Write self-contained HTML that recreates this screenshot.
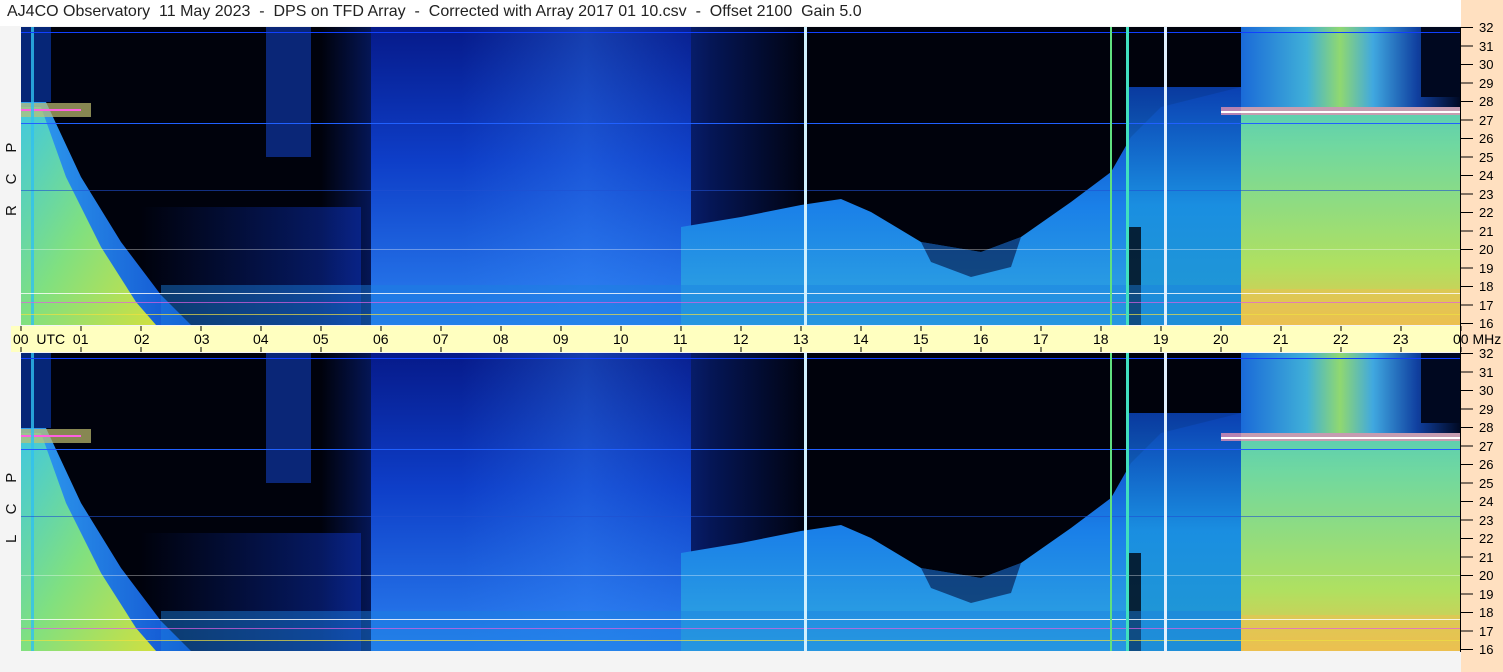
<!DOCTYPE html><html><head><meta charset="utf-8"><style>
body{margin:0;width:1503px;height:672px;overflow:hidden;background:#f4f4f4;font-family:"Liberation Sans",sans-serif;position:relative}
.t{position:absolute;left:7px;top:3px;font-size:16px;color:#222;white-space:pre}
svg{position:absolute;left:0;top:0}
text{white-space:pre}
</style></head><body>
<div style="position:absolute;left:0;top:0;width:1503px;height:26px;background:#fff"></div>
<div class="t">AJ4CO Observatory  11 May 2023  -  DPS on TFD Array  -  Corrected with Array 2017 01 10.csv  -  Offset 2100  Gain 5.0</div>
<svg width="1503" height="672" viewBox="0 0 1503 672" xml:space="preserve">
<defs>
<linearGradient id="blueMid" x1="0" y1="0" x2="0" y2="1"><stop offset="0" stop-color="#061a8a"/><stop offset="0.45" stop-color="#0e3ec8"/><stop offset="1" stop-color="#2a80f0"/></linearGradient>
<linearGradient id="hl" x1="0" y1="0" x2="1" y2="0"><stop offset="0" stop-color="#3a90ff" stop-opacity="0"/><stop offset="0.5" stop-color="#3a90ff" stop-opacity="0.3"/><stop offset="1" stop-color="#3a90ff" stop-opacity="0"/></linearGradient>
<linearGradient id="fadeL" x1="0" y1="0" x2="1" y2="0"><stop offset="0" stop-color="#0a2aa0" stop-opacity="0"/><stop offset="1" stop-color="#0a2aa0" stop-opacity="1"/></linearGradient>
<linearGradient id="fadeR" x1="0" y1="0" x2="1" y2="0"><stop offset="0" stop-color="#0a2aa0"/><stop offset="1" stop-color="#0a2aa0" stop-opacity="0"/></linearGradient>
<linearGradient id="wedge" x1="0" y1="0" x2="1" y2="1"><stop offset="0" stop-color="#40c8e0"/><stop offset="0.5" stop-color="#80e080"/><stop offset="1" stop-color="#d0e040"/></linearGradient>
<linearGradient id="wedgeEdge" x1="0" y1="0" x2="1" y2="0"><stop offset="0" stop-color="#30a0f0"/><stop offset="1" stop-color="#1050d0"/></linearGradient>
<linearGradient id="low" x1="0" y1="0" x2="0" y2="1"><stop offset="0" stop-color="#0c40c0"/><stop offset="0.5" stop-color="#1a80e8"/><stop offset="1" stop-color="#30a8e0"/></linearGradient>
<linearGradient id="grn" x1="0" y1="0" x2="0" y2="1"><stop offset="0" stop-color="#30b8d8"/><stop offset="0.4" stop-color="#70d8a0"/><stop offset="0.8" stop-color="#b0e060"/><stop offset="1" stop-color="#e8c050"/></linearGradient>
<linearGradient id="grnTop" x1="0" y1="0" x2="1" y2="0"><stop offset="0" stop-color="#1a6ad8"/><stop offset="0.3" stop-color="#40b0d8"/><stop offset="0.45" stop-color="#90d870"/><stop offset="0.6" stop-color="#40a8e0"/><stop offset="0.8" stop-color="#1040a0"/><stop offset="1" stop-color="#000820"/></linearGradient>
<linearGradient id="teal" x1="0" y1="0" x2="0" y2="1"><stop offset="0" stop-color="#0a40b0"/><stop offset="0.5" stop-color="#1a90e0"/><stop offset="1" stop-color="#2098d0"/></linearGradient>
<g id="plot">
<rect x="0" y="0" width="1440" height="298" fill="#00020c"/>
<rect x="120" y="180" width="220" height="118" fill="url(#fadeL)" opacity="0.7"/>
<rect x="300" y="0" width="60" height="298" fill="url(#fadeL)" opacity="0.6"/>
<rect x="350" y="0" width="320" height="298" fill="url(#blueMid)"/>
<rect x="440" y="0" width="250" height="298" fill="url(#hl)"/>
<rect x="670" y="0" width="120" height="298" fill="url(#fadeR)" opacity="0.6"/>
<rect x="245" y="0" width="45" height="130" fill="#1040c0" opacity="0.6"/>
<path d="M660 298 L660 200 L720 190 L780 178 L820 172 L850 185 L900 215 L960 225 L1000 210 L1050 175 L1090 145 L1110 110 L1140 80 L1220 60 L1220 298 Z" fill="url(#low)"/>
<path d="M900 215 L960 225 L1000 210 L990 240 L950 250 L910 235 Z" fill="#041040" opacity="0.6"/>
<rect x="1105" y="60" width="115" height="238" fill="url(#teal)" opacity="0.9"/>
<rect x="1108" y="200" width="12" height="98" fill="#000510" opacity="0.8"/>
<rect x="1220" y="0" width="220" height="298" fill="url(#grn)"/>
<rect x="1220" y="0" width="220" height="80" fill="url(#grnTop)"/>
<rect x="1400" y="0" width="40" height="70" fill="#000820"/>
<rect x="1200" y="80" width="240" height="8" fill="#e090b0" opacity="0.8"/>
<rect x="1200" y="84" width="240" height="2" fill="#ffffff"/>
<path d="M0 75 L25 75 L60 150 L100 215 L140 268 L170 298 L0 298 Z" fill="url(#wedgeEdge)"/>
<path d="M0 80 L20 80 L45 150 L80 220 L115 275 L135 298 L0 298 Z" fill="url(#wedge)"/>
<rect x="0" y="76" width="70" height="14" fill="#c0c070" opacity="0.7"/>
<rect x="0" y="82" width="60" height="2" fill="#ff60e0"/>
<rect x="0" y="0" width="30" height="75" fill="#0a40c0" opacity="0.6"/>
<rect x="10" y="0" width="3" height="298" fill="#30c0f0" opacity="0.8"/>
<rect x="140" y="258" width="1080" height="40" fill="#1a80e0" opacity="0.45"/>
<rect x="1220" y="262" width="220" height="36" fill="#f0c050" opacity="0.5"/>
<rect x="0" y="266" width="1440" height="1" fill="#ffffff" opacity="0.8"/>
<rect x="0" y="275" width="1440" height="1" fill="#e060e0" opacity="0.7"/>
<rect x="0" y="287" width="1440" height="1" fill="#f0e040" opacity="0.7"/>
<rect x="0" y="222" width="1440" height="1" fill="#ffffff" opacity="0.35"/>
<rect x="0" y="5" width="1440" height="1" fill="#1040ff"/>
<rect x="0" y="96" width="1440" height="1" fill="#2060ff"/>
<rect x="0" y="163" width="1440" height="1" fill="#2050d0" opacity="0.6"/>
<rect x="783" y="0" width="3" height="298" fill="#d0f0ff"/>
<rect x="1089" y="0" width="2" height="298" fill="#60e080"/>
<rect x="1105" y="0" width="3" height="298" fill="#40e0c0"/>
<rect x="1143" y="0" width="3" height="298" fill="#e0f0ff"/>
</g>
</defs>
<use href="#plot" x="21" y="27"/>
<use href="#plot" x="21" y="353"/>
<rect x="11" y="326" width="1461" height="26" fill="#ffffc0"/>
<rect x="1461" y="0" width="42" height="672" fill="#ffe0c0"/>
<rect x="1460" y="27" width="1" height="625" fill="#000"/>
<g stroke="#000" stroke-width="1">
<path d="M21 326v5M81 326v5M141 326v5M201 326v5M261 326v5M321 326v5M381 326v5M441 326v5M501 326v5M561 326v5M621 326v5M681 326v5M741 326v5M801 326v5M861 326v5M921 326v5M981 326v5M1041 326v5M1101 326v5M1161 326v5M1221 326v5M1281 326v5M1341 326v5M1401 326v5M1461 326v5"/>
<path d="M21 347v5M81 347v5M141 347v5M201 347v5M261 347v5M321 347v5M381 347v5M441 347v5M501 347v5M561 347v5M621 347v5M681 347v5M741 347v5M801 347v5M861 347v5M921 347v5M981 347v5M1041 347v5M1101 347v5M1161 347v5M1221 347v5M1281 347v5M1341 347v5M1401 347v5M1461 347v5"/>
</g>
<g font-family="Liberation Sans, sans-serif" font-size="14" fill="#000">
<text x="13" y="344">00  UTC  01</text>
<text x="134" y="344">02</text><text x="194" y="344">03</text><text x="253" y="344">04</text><text x="313" y="344">05</text><text x="373" y="344">06</text><text x="433" y="344">07</text><text x="493" y="344">08</text><text x="553" y="344">09</text><text x="613" y="344">10</text><text x="673" y="344">11</text><text x="733" y="344">12</text><text x="793" y="344">13</text><text x="853" y="344">14</text><text x="913" y="344">15</text><text x="973" y="344">16</text><text x="1033" y="344">17</text><text x="1093" y="344">18</text><text x="1153" y="344">19</text><text x="1213" y="344">20</text><text x="1273" y="344">21</text><text x="1333" y="344">22</text><text x="1393" y="344">23</text><text x="1453" y="344">00 MHz</text>
</g>
<g font-family="Liberation Sans, sans-serif" font-size="13" fill="#000">
<path stroke="#000" d="M1461 27.5h12M1461 46h12M1461 64.5h12M1461 83h12M1461 101.5h12M1461 120h12M1461 138.5h12M1461 157h12M1461 175.5h12M1461 194h12M1461 212.5h12M1461 231h12M1461 249.5h12M1461 268h12M1461 286.5h12M1461 305h12M1461 323.5h12"/>
<text x="1479" y="32">32</text><text x="1479" y="51">31</text><text x="1479" y="69">30</text><text x="1479" y="88">29</text><text x="1479" y="106">28</text><text x="1479" y="125">27</text><text x="1479" y="143">26</text><text x="1479" y="162">25</text><text x="1479" y="180">24</text><text x="1479" y="199">23</text><text x="1479" y="217">22</text><text x="1479" y="236">21</text><text x="1479" y="254">20</text><text x="1479" y="273">19</text><text x="1479" y="291">18</text><text x="1479" y="310">17</text><text x="1479" y="328">16</text>
</g>
<g transform="translate(0,326)" font-family="Liberation Sans, sans-serif" font-size="13" fill="#000">
<path stroke="#000" d="M1461 27.5h12M1461 46h12M1461 64.5h12M1461 83h12M1461 101.5h12M1461 120h12M1461 138.5h12M1461 157h12M1461 175.5h12M1461 194h12M1461 212.5h12M1461 231h12M1461 249.5h12M1461 268h12M1461 286.5h12M1461 305h12M1461 323.5h12"/>
<text x="1479" y="32">32</text><text x="1479" y="51">31</text><text x="1479" y="69">30</text><text x="1479" y="88">29</text><text x="1479" y="106">28</text><text x="1479" y="125">27</text><text x="1479" y="143">26</text><text x="1479" y="162">25</text><text x="1479" y="180">24</text><text x="1479" y="199">23</text><text x="1479" y="217">22</text><text x="1479" y="236">21</text><text x="1479" y="254">20</text><text x="1479" y="273">19</text><text x="1479" y="291">18</text><text x="1479" y="310">17</text><text x="1479" y="328">16</text>
</g>
<g font-family="Liberation Sans, sans-serif" font-size="15" fill="#111">
<text transform="translate(16,216) rotate(-90)">R     C     P</text>
<text transform="translate(16,543) rotate(-90)">L     C     P</text>
</g>
</svg>
</body></html>
